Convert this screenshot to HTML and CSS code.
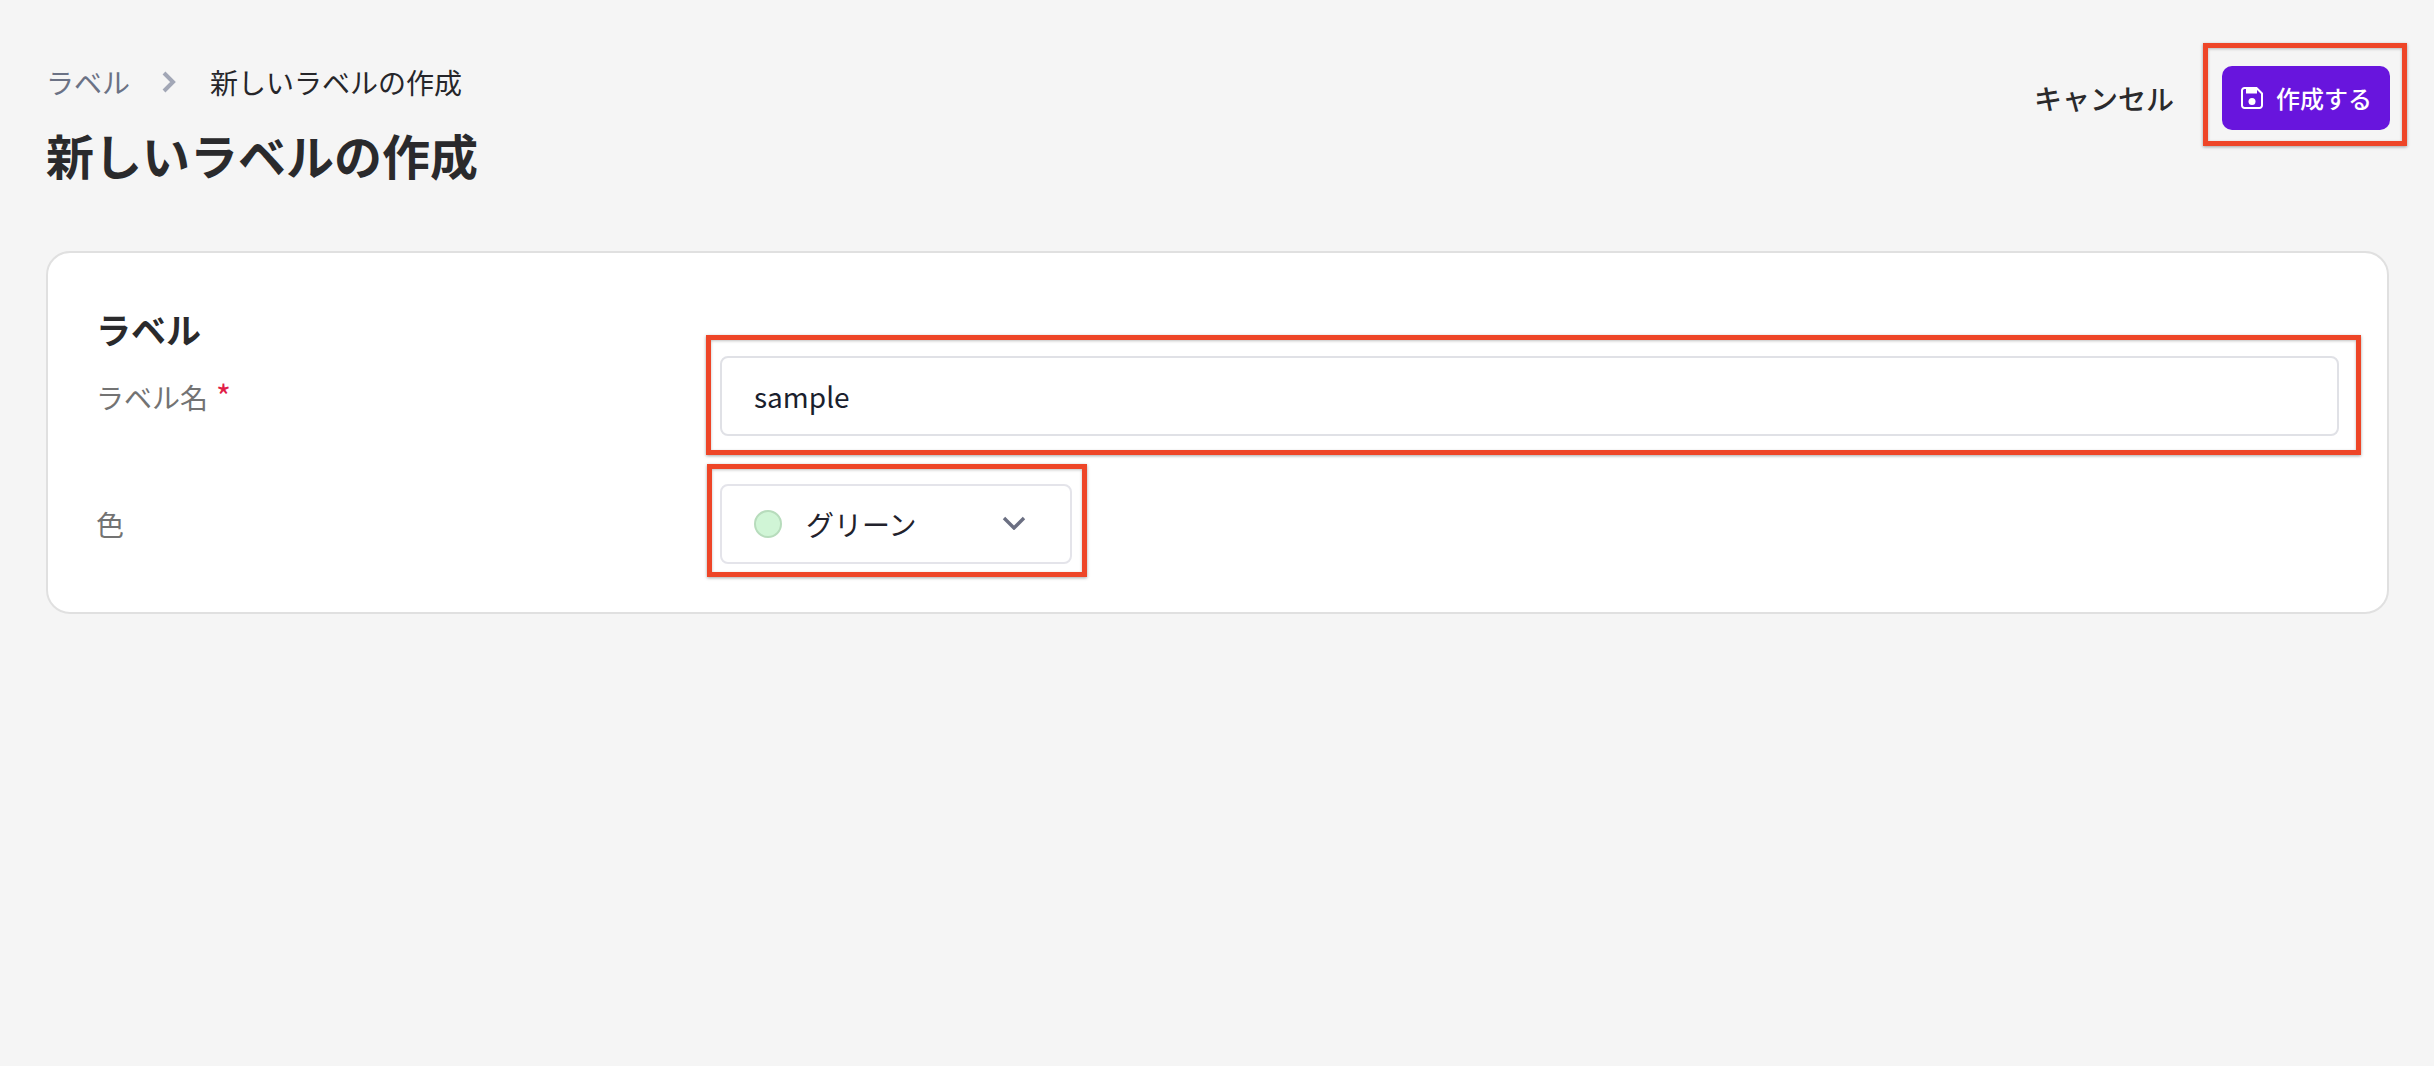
FILE: index.html
```html
<!DOCTYPE html>
<html lang="ja">
<head>
<meta charset="utf-8">
<title>新しいラベルの作成</title>
<link rel="stylesheet" href="styles.css">
</head>
<body>
<div class="page">
  <header class="page-header">
    <div class="heading-block">
      <nav class="breadcrumb">
        <span class="crumb-link">ラベル</span>
        <svg class="crumb-sep" viewBox="0 0 16 24" fill="none"><path d="M3 3l9 9-9 9" stroke="currentColor" stroke-width="4"/></svg>
        <span class="crumb-current">新しいラベルの作成</span>
      </nav>
      <h1 class="page-title">新しいラベルの作成</h1>
    </div>
    <div class="actions">
      <span class="cancel">キャンセル</span>
      <div class="marked">
        <button class="primary" type="button">
          <svg class="save-icon" viewBox="0 0 22 22" fill="none"><path d="M3.500 1h12L21 6.500v12a2.500 2.500 0 0 1-2.500 2.500h-15A2.500 2.500 0 0 1 1 18.500v-15A2.500 2.500 0 0 1 3.500 1z" stroke="currentColor" stroke-width="2"/><rect x="5" y="1" width="11" height="5.500" fill="currentColor"/><circle cx="11" cy="14.500" r="3.500" fill="currentColor"/></svg>
          作成する
        </button>
        <span class="mark mark-button"></span>
      </div>
    </div>
  </header>
  <section class="card">
    <h2 class="card-title">ラベル</h2>
    <div class="form-grid">
      <label class="field-label field-label-first">ラベル名<span class="required">*</span></label>
      <div class="marked">
        <input class="text-input" type="text" value="sample">
        <span class="mark mark-input"></span>
      </div>
      <label class="field-label">色</label>
      <div class="marked select-wrap">
        <div class="select">
          <span class="dot"></span>
          <span class="select-text">グリーン</span>
          <svg class="chevron" viewBox="0 0 24 14" fill="none"><path d="M2 2l10 10L22 2" stroke="currentColor" stroke-width="3.400"/></svg>
        </div>
        <span class="mark mark-select"></span>
      </div>
    </div>
  </section>
</div>
</body>
</html>
```
FILE: styles.css
```css
* { box-sizing: border-box; }
html, body { margin: 0; height: 100%; }
body {
  background: #f5f5f5;
  color: #2a2a2c;
  font-family: "Noto Sans CJK JP", "Noto Sans", sans-serif;
  overflow: hidden;
}
.page { padding: 0 44px 0 46px; }
.page-header {
  display: flex;
  justify-content: space-between;
  align-items: flex-start;
  height: 251px;
}
.heading-block { padding-top: 62px; }
.breadcrumb {
  display: flex;
  align-items: center;
  height: 40px;
  font-size: 28px;
  line-height: 40px;
}
.crumb-link { color: #6b7285; width: 115px; }
.crumb-sep { width: 16px; height: 24px; color: #a2a7b6; margin-right: 33px; }
.crumb-current { color: #26262a; }
.page-title {
  margin: 20px 0 0;
  font-size: 48px;
  line-height: 64px;
  font-weight: 700;
}
.actions {
  display: flex;
  align-items: center;
  gap: 48px;
  padding-top: 66px;
}
.cancel { font-size: 28px; line-height: 64px; font-weight: 500; }
.marked { position: relative; }
.primary {
  display: flex;
  align-items: center;
  gap: 13px;
  width: 168px;
  height: 64px;
  padding: 0 0 0 19px;
  border: 0;
  border-radius: 10px;
  background: #6815dd;
  color: #fff;
  font: 500 24px/1 "Noto Sans CJK JP", sans-serif;
}
.save-icon { width: 22px; height: 22px; flex: none; }
.mark {
  position: absolute;
  border: 5px solid #ee4527;
  box-shadow: 0 1px 3px rgba(0, 0, 0, .35), inset 0 1px 3px rgba(0, 0, 0, .25);
  pointer-events: none;
}
.mark-button { inset: -23px -17px -16px -19px; }
.mark-input { inset: -21px -22px -19px -14px; }
.mark-select { inset: -20px -15px -13px -13px; }
.card {
  height: 363px;
  margin-right: 1px;
  padding: 48px;
  background: #fff;
  border: 2px solid #e0e0e0;
  border-radius: 24px;
}
.card-title {
  margin: 0;
  height: 55px;
  font-size: 35px;
  line-height: 55px;
  font-weight: 700;
}
.form-grid {
  display: grid;
  grid-template-columns: 624px 1fr;
  row-gap: 48px;
  align-items: center;
}
.field-label { color: #737373; font-size: 28px; line-height: 40px; }
.field-label-first { margin-top: 1px; }
.required { color: #e11d48; margin-left: 8px; font-size: 32px; line-height: 0; }
.text-input {
  display: block;
  width: 100%;
  height: 80px;
  padding: 0 32px;
  background: #fff;
  border: 2px solid #e0e1e6;
  border-radius: 8px;
  color: #1a1f2e;
  font: 400 28px "Noto Sans CJK JP", sans-serif;
  outline: none;
}
.select-wrap { width: 352px; }
.select {
  display: flex;
  align-items: center;
  height: 80px;
  padding: 0 44px 0 32px;
  border: 2px solid #e4e4ea;
  border-radius: 8px;
  font-size: 28px;
  color: #22222c;
}
.dot {
  width: 28px;
  height: 28px;
  flex: none;
  border-radius: 50%;
  background: #d0f5d6;
  border: 2px solid #b7dcbc;
}
.select-text { margin-left: 24px; flex: 1; }
.chevron { width: 24px; height: 14px; color: #6b6f82; margin-top: -2px; }
```
